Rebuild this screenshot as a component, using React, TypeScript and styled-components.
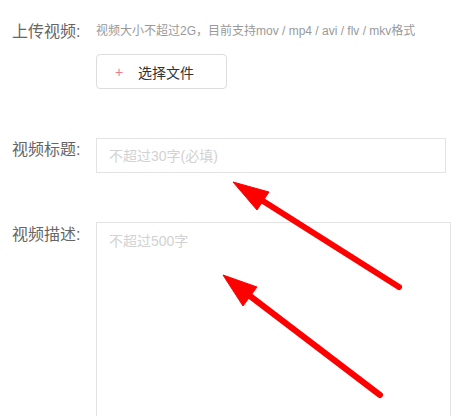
import styled, { createGlobalStyle } from 'styled-components';

const GlobalStyle = createGlobalStyle`
  html, body {
    margin: 0;
    padding: 0;
    background: #ffffff;
    overflow: hidden;
  }
  body {
    font-family: "Liberation Sans", "Noto Sans CJK SC", sans-serif;
  }
`;

const Page = styled.div`
  position: relative;
  width: 451px;
  height: 416px;
  overflow: hidden;
`;

const Form = styled.form`
  display: flex;
  flex-direction: column;
  padding: 23px 0 0 12px;
`;

const Row = styled.div<{ $top?: number }>`
  display: flex;
  align-items: flex-start;
  margin-top: ${(p) => p.$top ?? 0}px;
`;

const Label = styled.label<{ $pad?: number }>`
  flex: 0 0 84px;
  padding-top: ${(p) => p.$pad ?? 0}px;
  font-size: 16px;
  line-height: 16px;
  color: #666666;
  white-space: nowrap;
`;

const Field = styled.div`
  display: flex;
  flex-direction: column;
  align-items: flex-start;
`;

const Hint = styled.div`
  font-size: 12px;
  line-height: 16px;
  color: #999999;
  white-space: nowrap;
`;

const FileButton = styled.button`
  display: flex;
  align-items: center;
  width: 131px;
  height: 35px;
  margin-top: 15px;
  padding: 0 0 0 18px;
  box-sizing: border-box;
  border: 1px solid #dddddd;
  border-radius: 4px;
  background: #ffffff;
  font-family: inherit;
  font-size: 14px;
  color: #333333;
  cursor: pointer;
`;

const Plus = styled.span`
  width: 23px;
  text-align: left;
  font-size: 14px;
  color: #f27a8c;
`;

const TextInput = styled.input`
  width: 350px;
  height: 35px;
  box-sizing: border-box;
  padding: 0 12px;
  border: 1px solid #e3e3e3;
  outline: none;
  font-family: inherit;
  font-size: 14px;
  color: #333333;
  &::placeholder {
    color: #d2d2d2;
  }
`;

const TextArea = styled.textarea`
  width: 420px;
  height: 240px;
  box-sizing: border-box;
  padding: 8px 12px;
  border: 1px solid #e3e3e3;
  outline: none;
  resize: none;
  font-family: inherit;
  font-size: 14px;
  line-height: 20px;
  color: #333333;
  &::placeholder {
    color: #d2d2d2;
  }
`;

const Overlay = styled.svg`
  position: absolute;
  top: 0;
  left: 0;
  pointer-events: none;
`;

const arrows = [
  { tip: [233, 182], a: [269, 192], b: [257, 210], from: [263, 201], tail: [399, 287] },
  { tip: [223, 275], a: [257, 287], b: [243, 306], from: [250, 296], tail: [380, 395] },
];

export default function App(): JSX.Element {
  return (
    <Page>
      <GlobalStyle />
      <Form onSubmit={(e) => e.preventDefault()}>
        <Row>
          <Label $pad={1}>上传视频:</Label>
          <Field>
            <Hint>视频大小不超过2G，目前支持mov / mp4 / avi / flv / mkv格式</Hint>
            <FileButton type="button">
              <Plus>+</Plus>
              选择文件
            </FileButton>
          </Field>
        </Row>
        <Row $top={49}>
          <Label $pad={4}>视频标题:</Label>
          <TextInput placeholder="不超过30字(必填)" />
        </Row>
        <Row $top={49}>
          <Label $pad={5}>视频描述:</Label>
          <TextArea placeholder="不超过500字" />
        </Row>
      </Form>
      <Overlay width="451" height="416" viewBox="0 0 451 416">
        {arrows.map((r, i) => (
          <g key={i} fill="#ff0000" stroke="#ff0000">
            <line
              x1={r.from[0]}
              y1={r.from[1]}
              x2={r.tail[0]}
              y2={r.tail[1]}
              strokeWidth={6}
              strokeLinecap="round"
            />
            <polygon
              points={`${r.tip.join(',')} ${r.a.join(',')} ${r.b.join(',')}`}
              strokeWidth={1}
              strokeLinejoin="miter"
            />
          </g>
        ))}
      </Overlay>
    </Page>
  );
}
